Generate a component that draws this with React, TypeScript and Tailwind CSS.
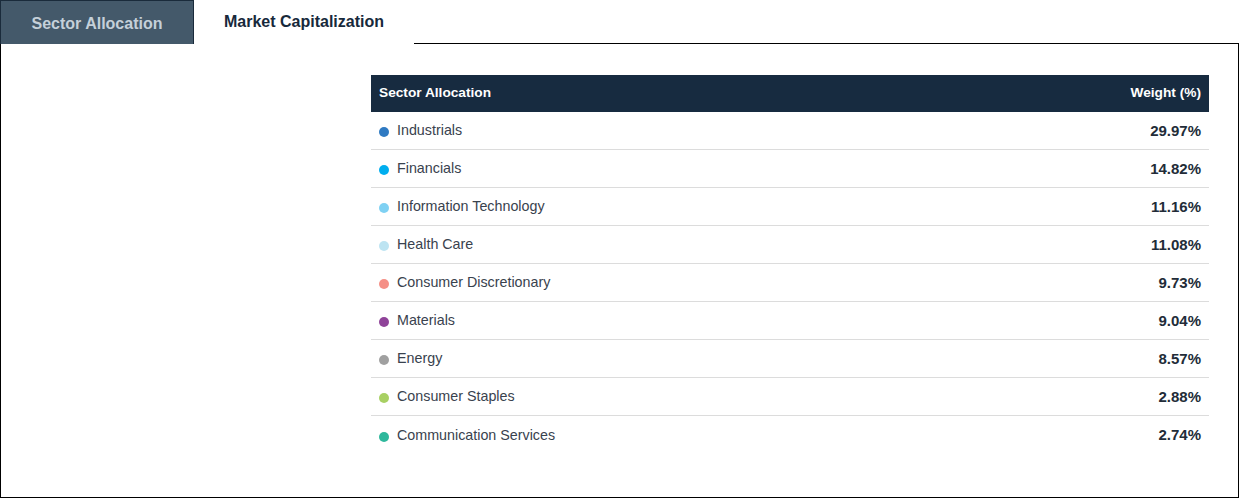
import React from "react";

const rows = [
  { name: "Industrials", value: "29.97%", color: "#2f7ac2" },
  { name: "Financials", value: "14.82%", color: "#00aeef" },
  { name: "Information Technology", value: "11.16%", color: "#7fd1f3" },
  { name: "Health Care", value: "11.08%", color: "#bde4f2" },
  { name: "Consumer Discretionary", value: "9.73%", color: "#f58f86" },
  { name: "Materials", value: "9.04%", color: "#8f4399" },
  { name: "Energy", value: "8.57%", color: "#a0a0a0" },
  { name: "Consumer Staples", value: "2.88%", color: "#a8d063" },
  { name: "Communication Services", value: "2.74%", color: "#2eb89c" },
];

export default function App() {
  return (
    <div className="w-[1240px] h-[500px] bg-white" style={{ fontFamily: "'Liberation Sans', Arial, sans-serif" }}>
      <div className="flex h-[44px]">
        <div className="w-[194px] h-[44px] bg-[#44596a] border border-[#1a2b3b] border-b-0 flex items-center justify-center pt-[2px] text-[16px] font-bold text-[#c5d0d9]">
          Sector Allocation
        </div>
        <div className="w-[220px] h-[44px] flex items-center justify-center text-[16px] pb-[1px] font-bold text-[#17293b]">
          Market Capitalization
        </div>
        <div className="flex-1 h-[44px] border-b border-black mr-[1px]" />
      </div>
      <div className="h-[454px] w-[1239px] border-l border-r border-b border-black pt-[31px] pl-[370px]">
        <div className="w-[838px]">
          <div className="h-[37px] bg-[#172b40] flex items-center justify-between px-2 text-white font-bold text-[13.7px]">
            <span>Sector Allocation</span>
            <span>Weight (%)</span>
          </div>
          {rows.map((r, i) => (
            <div
              key={r.name}
              className={`h-[38px] flex items-center justify-between px-2 pt-[1px] ${i < rows.length - 1 ? "border-b border-[#dcdcdc]" : ""}`}
            >
              <div className="flex items-center">
                <span className="w-[10px] h-[10px] rounded-full mr-[8px] mt-[2px]" style={{ backgroundColor: r.color }} />
                <span className="text-[14.3px] text-[#39424e]">{r.name}</span>
              </div>
              <span className="text-[15px] font-bold text-[#222c38]">{r.value}</span>
            </div>
          ))}
        </div>
      </div>
    </div>
  );
}
